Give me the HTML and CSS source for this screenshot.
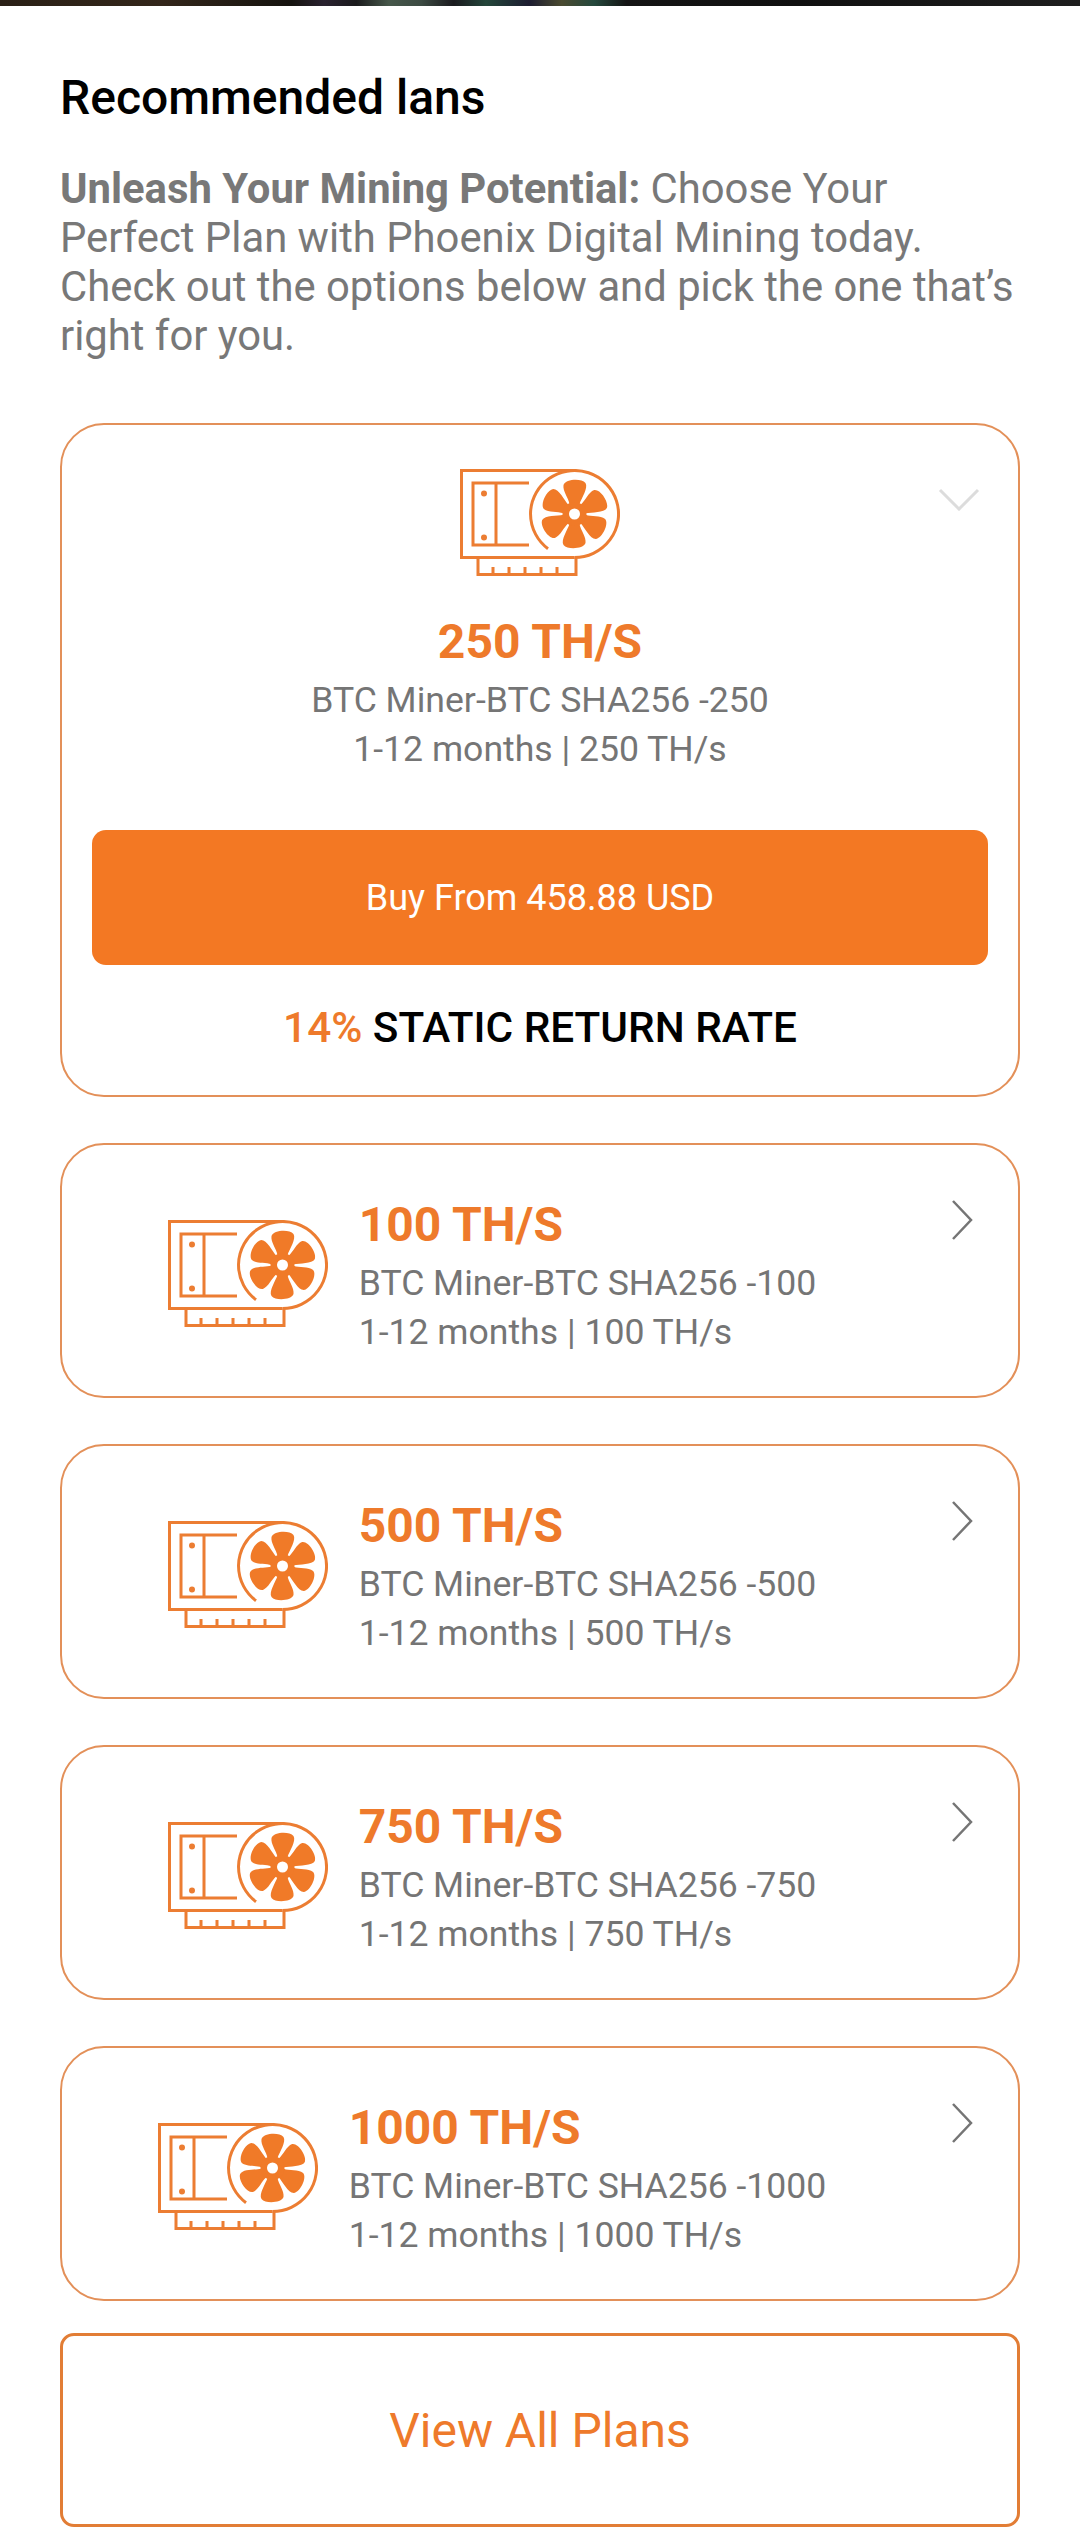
FILE: index.html
```html
<!DOCTYPE html>
<html lang="en">
<head>
  <meta charset="UTF-8" />
  <meta name="viewport" content="width=device-width, initial-scale=1.0"/>
  <title>Recommended Plans</title>
  <link rel="stylesheet" href="styles.css">
</head>
<body>
  <svg class="defs" width="0" height="0">
    <symbol id="miner" viewBox="0 0 160 107">
      <g fill="none" stroke="#ec7d32" stroke-width="3">
        <path d="M114.500 1.500H1.500V88.500H114.500"/>
        <path d="M18 88.500V105.500H116V88.500"/>
        <path d="M33 105V98M49 105V98M65 105V98M81 105V98M97 105V98"/>
        <path d="M69 14H13V76H69M36 14V76"/>
        <circle cx="24" cy="24.500" r="1.500"/>
        <circle cx="24" cy="68.500" r="1.500"/>
        <path d="M88 79.700A44 43.500 0 1 1 114.500 88.500"/>
      </g>
      <g fill="#f07a28" transform="translate(114.500 45)">
        <path id="blade" d="M-5 -10C-6 -16 -12 -23 -11 -29C-9 -35 7 -36 11 -31C14 -26 7 -16 5 -10Z"/>
        <use href="#blade" transform="rotate(60)"/>
        <use href="#blade" transform="rotate(120)"/>
        <use href="#blade" transform="rotate(180)"/>
        <use href="#blade" transform="rotate(240)"/>
        <use href="#blade" transform="rotate(300)"/>
        <path fill-rule="evenodd" d="M-12 0A12 12 0 1 1 12 0A12 12 0 1 1 -12 0ZM-5.500 0A5.500 5.500 0 1 0 5.500 0A5.500 5.500 0 1 0 -5.500 0Z"/>
      </g>
    </symbol>
    <symbol id="chevron" viewBox="0 0 24 42">
      <path d="M3 2L21 21L3 40" fill="none" stroke="#757575" stroke-width="2.500"/>
    </symbol>
  </svg>

  <div class="topstrip"></div>

  <main class="content">
    <h1>Recommended lans</h1>
    <p class="intro"><b>Unleash Your Mining Potential:</b> Choose Your<br>Perfect Plan with Phoenix Digital Mining today.<br>Check out the options below and pick the one that’s<br>right for you.</p>

    <section class="plan open">
      <svg class="close-arrow" viewBox="0 0 42 24"><path d="M2 3L21 22L40 3" fill="none" stroke="#dcdcdc" stroke-width="3"/></svg>
      <svg class="miner"><use href="#miner"/></svg>
      <h2>250 TH/S</h2>
      <div class="sub">BTC Miner-BTC SHA256 -250</div>
      <div class="sub">1-12 months | 250 TH/s</div>
      <button class="buy">Buy From 458.88 USD</button>
      <div class="rate"><span>14%</span> STATIC RETURN RATE</div>
    </section>

    <section class="plan row">
      <svg class="miner"><use href="#miner"/></svg>
      <div class="info">
        <h2>100 TH/S</h2>
        <div class="sub">BTC Miner-BTC SHA256 -100</div>
        <div class="sub">1-12 months | 100 TH/s</div>
      </div>
      <svg class="chevron"><use href="#chevron"/></svg>
    </section>

    <section class="plan row">
      <svg class="miner"><use href="#miner"/></svg>
      <div class="info">
        <h2>500 TH/S</h2>
        <div class="sub">BTC Miner-BTC SHA256 -500</div>
        <div class="sub">1-12 months | 500 TH/s</div>
      </div>
      <svg class="chevron"><use href="#chevron"/></svg>
    </section>

    <section class="plan row">
      <svg class="miner"><use href="#miner"/></svg>
      <div class="info">
        <h2>750 TH/S</h2>
        <div class="sub">BTC Miner-BTC SHA256 -750</div>
        <div class="sub">1-12 months | 750 TH/s</div>
      </div>
      <svg class="chevron"><use href="#chevron"/></svg>
    </section>

    <section class="plan row">
      <svg class="miner"><use href="#miner"/></svg>
      <div class="info">
        <h2>1000 TH/S</h2>
        <div class="sub">BTC Miner-BTC SHA256 -1000</div>
        <div class="sub">1-12 months | 1000 TH/s</div>
      </div>
      <svg class="chevron"><use href="#chevron"/></svg>
    </section>

    <a class="view-all">View All Plans</a>
  </main>
</body>
</html>
```

FILE: styles.css
```css
body {
  margin: 0;
  font-family: Roboto, "Liberation Sans", sans-serif;
  background-color: #fff;
}
.defs {
  position: absolute;
}
.topstrip {
  height: 6px;
  background: linear-gradient(90deg, #2a2016 0%, #33261a 15%, #15130f 27%, #2a2230 30%, #1a1a1c 33%, #46574a 36%, #3c4a42 39%, #1a1a1e 42%, #24463a 45%, #1c1c30 49%, #4a4a30 52%, #24483c 55%, #141414 58%, #101010 74%, #1e1e1e 100%);
}
.content {
  padding: 64px 60px 0;
}
h1 {
  margin: 0;
  height: 56px;
  font-size: 48px;
  line-height: 56px;
  font-weight: 500;
  color: #000;
}
.intro {
  margin: 38px 0 0;
  font-size: 41.800px;
  line-height: 49px;
  color: #787878;
}
.intro b {
  font-weight: 700;
}
.plan {
  position: relative;
  box-sizing: border-box;
  border: 2px solid #e39059;
  border-radius: 44px;
}
h2 {
  margin: 0 0 6px;
  font-size: 48px;
  line-height: 56px;
  font-weight: 700;
  color: #ee7a2b;
}
.sub {
  font-size: 35.600px;
  line-height: 49px;
  color: #757575;
}
.miner {
  width: 160px;
  height: 107px;
  flex: none;
}
.open {
  height: 674px;
  margin-top: 63px;
  padding: 44px 30px 0;
  text-align: center;
}
.open h2 {
  margin-top: 34px;
}
.close-arrow {
  position: absolute;
  top: 62px;
  right: 38px;
  width: 42px;
  height: 24px;
}
.buy {
  display: block;
  width: 100%;
  height: 135px;
  margin-top: 56px;
  background-color: #f37823;
  border: none;
  border-radius: 14px;
  color: #fff;
  font-family: inherit;
  font-size: 36px;
}
.rate {
  margin-top: 38px;
  font-size: 42.300px;
  line-height: 50px;
  font-weight: 500;
  color: #000;
}
.rate span {
  color: #ee7a2b;
}
.row {
  display: flex;
  justify-content: center;
  align-items: center;
  gap: 31px;
  height: 255px;
  margin-top: 46px;
  padding-top: 6px;
  padding-right: 96px;
}
.info {
  padding-top: 6px;
}
.chevron {
  position: absolute;
  top: 54px;
  right: 44px;
  width: 24px;
  height: 42px;
}
.view-all {
  display: flex;
  justify-content: center;
  align-items: center;
  box-sizing: border-box;
  height: 194px;
  margin-top: 32px;
  border: 3px solid #e27d35;
  border-radius: 14px;
  font-size: 48px;
  color: #ee7a2b;
}
```
